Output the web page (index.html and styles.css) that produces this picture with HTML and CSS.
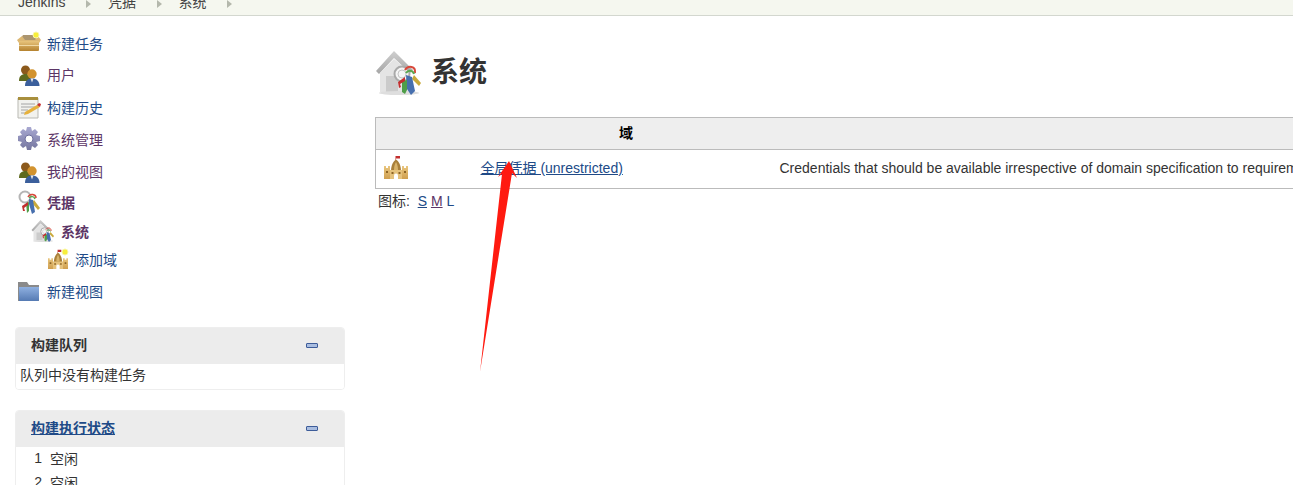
FILE: index.html
```html
<!DOCTYPE html>
<html lang="zh">
<head>
<meta charset="utf-8">
<title>系统</title>
<link rel="stylesheet" href="styles.css">
</head>
<body>
<svg class="defs" width="0" height="0" aria-hidden="true">
  <defs>
    <linearGradient id="box" x1="0" y1="0" x2="0" y2="1"><stop offset="0" stop-color="#e8c47c"/><stop offset="1" stop-color="#b5822f"/></linearGradient>
    <linearGradient id="folder" x1="0" y1="0" x2="0" y2="1"><stop offset="0" stop-color="#8fb0e0"/><stop offset="1" stop-color="#557ab3"/></linearGradient>
    <linearGradient id="roof" x1="0" y1="0" x2="0" y2="1"><stop offset="0" stop-color="#cfcfcf"/><stop offset="1" stop-color="#a6a6a6"/></linearGradient>
    <linearGradient id="gear" x1="0" y1="0" x2="0" y2="1"><stop offset="0" stop-color="#a9a9d2"/><stop offset="1" stop-color="#75769f"/></linearGradient>
    <linearGradient id="gold" x1="0" y1="0" x2="0" y2="1"><stop offset="0" stop-color="#e9c67f"/><stop offset="1" stop-color="#cf9f4f"/></linearGradient>
    <symbol id="i-users" viewBox="0 0 24 24">
      <circle cx="8.500" cy="8" r="4.500" fill="#8c5a1c"/>
      <path d="M2 19c0-5 2.500-7 6.500-7s5.500 2 5.500 7z" fill="#5f6a1e"/>
      <circle cx="15" cy="12" r="4.700" fill="#d2932f"/>
      <path d="M8 24c0-5 2.500-7.500 7-7.500S22.500 19 22.500 24z" fill="#3b5f9c"/>
      <path d="M13.500 16.500h3l-1.500 4z" fill="#e9e9e9"/>
    </symbol>
    <symbol id="i-keys" viewBox="0 0 24 24">
      <circle cx="8" cy="7" r="5.500" fill="#fff" fill-opacity=".5" stroke="#b5b5b5" stroke-width="2"/>
      <path d="M11 7c2-4 8-3 8 1" fill="none" stroke="#d8483b" stroke-width="1.500"/>
      <path d="M12 8c2-2 5-2 6 1" fill="none" stroke="#5aa64e" stroke-width="1.500"/>
      <path d="M17 10l6 8-2 2-6-7z" fill="#c9a93a"/>
      <path d="M12 9l4 1 2 12-3 2-3-10z" fill="#476fae"/>
      <path d="M9 13l3-1 0 9-2 2z" fill="#4f9e49"/>
      <path d="M5 16l6-4 0 3-4 3 1 3-2 0z" fill="#c22f2f"/>
    </symbol>
    <symbol id="i-house" viewBox="0 0 48 48">
      <path d="M1 22L19 2l19 19-3 3-16-15L4 25z" fill="url(#roof)"/>
      <path d="M5 24L19 10l16 13v20H5z" fill="#e4e4e4"/>
      <path d="M11 27h12v16H11z" fill="#cbcbcb"/>
      <ellipse cx="24" cy="44" rx="20" ry="2" fill="#dedede"/>
      <circle cx="27" cy="25" r="7.500" fill="#f5f5f5" stroke="#aaa" stroke-width="2"/>
      <circle cx="27" cy="25" r="4" fill="none" stroke="#c4c4c4"/>
      <path d="M30 21c3-5 11-4 10 3" fill="none" stroke="#d8483b" stroke-width="2"/>
      <path d="M31 24c2-3 7-3 8 1" fill="none" stroke="#5aa64e" stroke-width="2"/>
      <path d="M39 26l7 8-2 3-7-7z" fill="#c9a93a"/>
      <path d="M31 26l6 2 3 14-4 4-4-6z" fill="#476fae"/>
      <path d="M27 32l5-1 0 10-2 4-3-2z" fill="#4f9e49"/>
      <path d="M23 33l7-5 0 4-5 3 1 3-2 1z" fill="#c22f2f"/>
    </symbol>
    <symbol id="i-castle" viewBox="0 0 24 24">
      <path d="M11.500 1h4.500v2.500h-4v2h-.500z" fill="#c22f2f"/>
      <path d="M7 16c0-6 2.500-10 5-11.500C14.500 6 17 10 17 16z" fill="#a9803a"/>
      <path d="M10 15c0-4 1-6 2-8 1 2 2 4 2 8z" fill="#d8b36a"/>
      <path d="M0 11h2v2h2v-2h2v13H0zM18 11h2v2h2v-2h2v13h-6z" fill="url(#gold)"/>
      <path d="M6 15h12v9H6z" fill="#e5c27c"/>
      <path d="M10 24v-3.500a2 2 0 0 1 4 0V24z" fill="#fff"/>
      <path d="M2 16h2v2H2zM20 16h2v2h-2zM7.500 17h2v2h-2zM14.500 17h2v2h-2z" fill="#8d6424"/>
    </symbol>
  </defs>
</svg>

<nav class="breadcrumb">
  <span class="crumb">Jenkins</span>
  <span class="caret"></span>
  <span class="crumb">凭据</span>
  <span class="caret"></span>
  <span class="crumb">系统</span>
  <span class="caret"></span>
</nav>

<div class="page">
  <aside class="side">
    <ul class="tasks">
      <li class="task">
        <svg class="ico" viewBox="0 0 24 24"><path d="M6 4h12l3 5H3z" fill="#ab9570"/><path d="M0 9l5-4 3 4 10 0 3-4 3 4-2 3H2z" fill="#dcb773"/><path d="M2 10h20v9a1 1 0 0 1-1 1H3a1 1 0 0 1-1-1z" fill="url(#box)"/><path d="M2 14h20v1H2z" fill="#f0d9a4"/><circle cx="19" cy="4" r="3" fill="#f7ee3a" stroke="#f9f6a8"/></svg>
        <span>新建任务</span>
      </li>
      <li class="task task-visited task-users"><svg class="ico"><use href="#i-users"/></svg><span>用户</span></li>
      <li class="task">
        <svg class="ico" viewBox="0 0 24 24"><path d="M1 3h20v20H1z" fill="#f2f2ee" stroke="#b9b9b3"/><path d="M1 2h20v3H1z" fill="#a88f3d"/><path d="M4 9h14M4 12h14M4 15h7M4 18h4" stroke="#a4a4a4" fill="none"/><path d="M7 20l1-3L20 10l3 2-12 7z" fill="#e6b13c"/><path d="M20 10l3 2 1-3-2-1z" fill="#c62f2f"/></svg>
        <span>构建历史</span>
      </li>
      <li class="task task-visited">
        <svg class="ico" viewBox="0 0 24 24"><path d="M10 0h4l1 4 3-2 3 3-2 3 4 1v5l-4 1 2 3-3 3-3-2-1 4h-4l-1-4-3 2-3-3 2-3-4-1V9l4-1-2-3 3-3 3 2z" fill="url(#gear)"/><circle cx="12" cy="12" r="4" fill="#fff" stroke="#6e6f9e"/></svg>
        <span>系统管理</span>
      </li>
      <li class="task task-visited"><svg class="ico"><use href="#i-users"/></svg><span>我的视图</span></li>
      <li class="task task-on task-creds"><svg class="ico"><use href="#i-keys"/></svg><span>凭据</span></li>
      <li class="task task-sub task-on"><svg class="ico"><use href="#i-house"/></svg><span>系统</span></li>
      <li class="task task-sub2">
        <span class="ico-wrap">
          <svg class="ico ico-s"><use href="#i-castle"/></svg>
          <svg class="star" viewBox="0 0 8 8"><circle cx="4" cy="4" r="3" fill="#f7ee3a" stroke="#f9f6a8"/></svg>
        </span>
        <span>添加域</span>
      </li>
      <li class="task task-last">
        <svg class="ico" viewBox="0 0 24 24"><path d="M1 3h9l2 3h10v16H1z" fill="#8a8a8a"/><path d="M2 8h20v13a1 1 0 0 1-1 1H2z" fill="url(#folder)"/></svg>
        <span>新建视图</span>
      </li>
    </ul>

    <section class="pane">
      <header class="pane-head"><span class="pane-title">构建队列</span><span class="collapse"></span></header>
      <div class="pane-body queue">队列中没有构建任务</div>
    </section>

    <section class="pane">
      <header class="pane-head"><a class="pane-title pane-link">构建执行状态</a><span class="collapse"></span></header>
      <div class="pane-body">
        <div class="exec"><span class="num">1</span><span>空闲</span></div>
        <div class="exec"><span class="num">2</span><span>空闲</span></div>
      </div>
    </section>
  </aside>

  <main class="main">
    <h1 class="title"><svg class="title-ico"><use href="#i-house"/></svg><span>系统</span></h1>
    <table class="domains">
      <thead><tr><th class="c-icon"></th><th class="c-name">域</th><th class="c-desc"></th></tr></thead>
      <tbody>
        <tr>
          <td class="c-icon"><svg class="ico"><use href="#i-castle"/></svg></td>
          <td class="c-name"><a class="link">全局凭据 (unrestricted)</a></td>
          <td class="c-desc">Credentials that should be available irrespective of domain specification to requirements matching.</td>
        </tr>
      </tbody>
    </table>
    <div class="sizes">图标:&nbsp; <a class="link">S</a> <a class="link link-visited">M</a> <span class="plain">L</span></div>
  </main>
</div>

<svg class="arrow" width="60" height="230" viewBox="0 0 60 230" aria-hidden="true">
  <path d="M10 222 L32 24 L28 27 L39 11 L47 28 L42 23 Z" fill="#ff1a10"/>
</svg>
</body>
</html>
```
FILE: styles.css
```css
* { box-sizing: border-box; }
html, body { margin: 0; height: 485px; overflow: hidden; background: #fff; }
body {
  position: relative;
  font-family: "Liberation Sans", "Noto Sans CJK SC", sans-serif;
  font-size: 14px;
  color: #333;
}
.defs { display: block; height: 0; }

.breadcrumb {
  display: flex;
  align-items: flex-start;
  height: 16px;
  overflow: hidden;
  padding-left: 18px;
  background: #f5f7ef;
  border-bottom: 1px solid #d3d7cf;
  color: #444;
}
.crumb { line-height: 20px; height: 20px; margin-top: -8px; flex: none; }
.caret {
  flex: none;
  width: 0; height: 0;
  margin: 0 16.500px 0 21px;
  border-left: 5px solid #b4b8ac;
  border-top: 4px solid transparent;
  border-bottom: 4px solid transparent;
}

.page { display: flex; align-items: flex-start; }

.side { flex: none; width: 375px; padding: 11px 30px 0 15px; }
.tasks { list-style: none; margin: 0 0 19px; padding: 0; }
.task {
  display: flex;
  align-items: center;
  gap: 6px;
  height: 32px;
  padding-left: 2px;
  color: #204a87;
}
.task-visited { color: #5c3566; }
.task-users { margin: -1px 0 1px; }
.task-creds { margin-top: -1px; }
.task-on { font-weight: 700; color: #5c3566; }
.task-sub { padding-left: 16px; height: 26px; gap: 6px; }
.task-sub .ico { width: 24px; height: 24px; }
.task-sub2 { padding-left: 33px; height: 30px; gap: 7px; }
.task-last { height: 34px; }
.ico { width: 24px; height: 24px; flex: none; display: block; }
.ico-wrap { position: relative; display: block; width: 20px; height: 20px; flex: none; }
.ico-s { width: 20px; height: 20px; }
.star { position: absolute; top: -1px; right: -1px; width: 8px; height: 8px; }

.pane {
  border: 1px solid #eee;
  border-radius: 4px;
  margin-bottom: 20px;
  overflow: hidden;
}
.pane-head {
  display: flex;
  align-items: center;
  justify-content: space-between;
  height: 36px;
  padding: 0 26px 0 15px;
  background: #ececec;
  font-weight: 700;
  font-size: 14px;
}
.pane-title { margin-bottom: 4px; }
.pane-link { color: #204a87; text-decoration: underline; }
.collapse {
  width: 12px; height: 5px;
  margin-bottom: 1px;
  background: #a9bde0;
  border: 1px solid #3d5c99;
  border-radius: 1px;
}
.pane-body { background: #fff; }
.queue { padding: 2px 4px; height: 25px; line-height: 18px; }
.exec { display: flex; gap: 8px; height: 24px; align-items: center; padding: 0 0 3px 18px; }
.num { width: 8px; text-align: right; }

.main { flex: none; width: 1100px; padding-top: 33px; }
.title {
  display: flex;
  align-items: center;
  gap: 8px;
  margin: 0 0 20px;
  font-size: 28px;
  line-height: 48px;
  color: #333;
}
.title-ico { width: 48px; height: 48px; flex: none; display: block; }

.domains {
  border-collapse: collapse;
  width: 1100px;
  table-layout: fixed;
  border: 1px solid #bbb;
}
.domains th {
  background: #eee;
  height: 32px;
  font-size: 14px;
  color: #000;
  border-bottom: 1px solid #bbb;
  padding: 0 0 4px 2px;
}
.domains td { height: 39px; padding: 0 0 2px; }
.c-icon { width: 100px; }
.domains td.c-icon { padding: 0 0 4px 8px; }
.c-name { width: 299px; }
.domains td.c-name { padding: 0 0 4px 5px; }
.domains td.c-desc { padding: 0 0 2px 5px; white-space: nowrap; overflow: hidden; }
.link { color: #204a87; text-decoration: underline; }
.link-visited { color: #5c3566; }
.sizes { padding: 3px 0 0 3px; line-height: 19px; }
.plain { color: #204a87; }

.arrow { position: absolute; left: 470px; top: 150px; }
```
